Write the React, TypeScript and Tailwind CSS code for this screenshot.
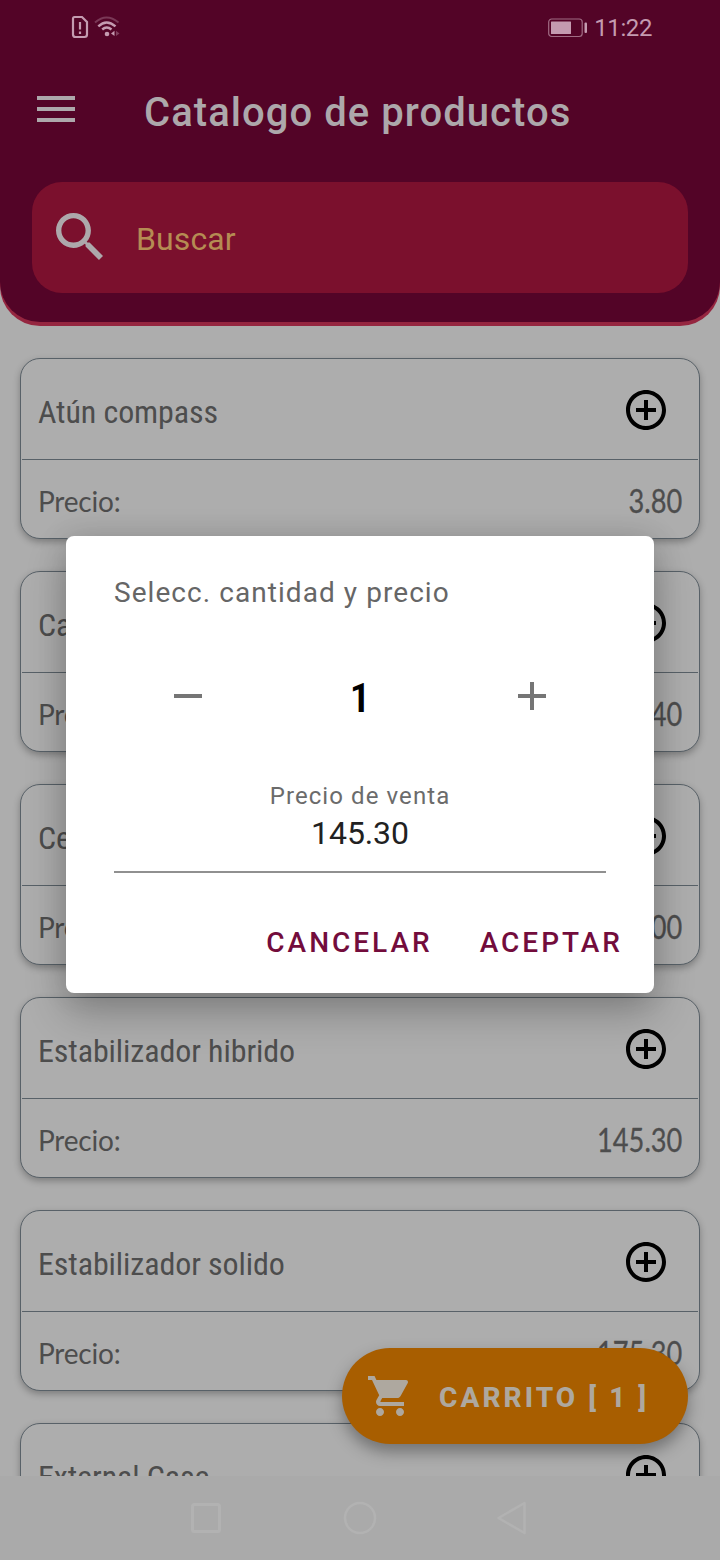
type Product = { name: string; price: string };

const products: Product[] = [
  { name: "Atún compass", price: "3.80" },
  { name: "Cable usb", price: "2.40" },
  { name: "Cerveza", price: "1.00" },
  { name: "Estabilizador hibrido", price: "145.30" },
  { name: "Estabilizador solido", price: "175.30" },
  { name: "External Case", price: "20.00" },
];

function StatusBar() {
  return (
    <div className="flex h-14 items-center pl-[70px] pr-[68px] text-[#c49bb0]">
      <svg width="20" height="24" viewBox="0 0 20 24" fill="none" stroke="currentColor" strokeWidth="2.2" className="relative -top-px">
        <path d="M4.5 2H12L17 7V19.5Q17 22 14.5 22H5.5Q3 22 3 19.5V4Q3 2 4.500 2Z" />
        <path d="M10 7V14.500M10 16.500V19" strokeWidth="2.200" />
      </svg>
      <svg width="26" height="22" viewBox="0 0 26 22" fill="none" stroke="currentColor" strokeWidth="2.400" className="relative -top-px ml-1">
        <path d="M1 6.500Q12.500 -3.500 24.500 6.500" opacity="0.35" strokeWidth="2" />
        <path d="M4.300 10.300Q12.500 2.500 21.500 10.300" />
        <path d="M8.200 13.500Q12.700 9.500 17.500 13.500" />
        <circle cx="13" cy="18" r="2.300" fill="currentColor" stroke="none" />
        <path d="M20.500 14.800V20L17 17.400Z" fill="currentColor" stroke="none" />
        <path d="M22 14.800V20L25.500 17.400Z" fill="currentColor" stroke="none" opacity="0.4" />
      </svg>
      <div className="flex-1" />
      <svg width="40" height="20" viewBox="0 0 40 20" fill="none">
        <rect x="0.700" y="1" width="33.500" height="17.500" rx="3" stroke="#a06c84" strokeWidth="1.200" />
        <rect x="3" y="3.500" width="20" height="12.500" rx="0.500" fill="currentColor" />
        <rect x="36.500" y="4.500" width="2.500" height="10.500" rx="1" fill="currentColor" />
      </svg>
      <span className="ml-[6px] text-[24px] leading-none tracking-[-0.4px]">11:22</span>
    </div>
  );
}

function Header() {
  return (
    <header className="h-[326px] shrink-0 rounded-b-[40px] bg-[#952640] pb-1">
      <div className="h-full rounded-b-[40px] bg-[#530427]">
        <StatusBar />
        <div className="flex h-[112px] items-center pl-[37px]">
          <svg width="38" height="26" viewBox="0 0 38 26" fill="#ada8ab" className="relative -top-[3px]">
            <path d="M0 0H38V4H0ZM0 11H38V15H0ZM0 22H38V26H0Z" />
          </svg>
          <h1 className="ml-[69px] whitespace-nowrap pt-px text-[40px] font-medium leading-none tracking-[1.05px] text-[#ada8ab]">
            Catalogo de productos
          </h1>
        </div>
        <div className="mx-8 mt-[14px] flex h-[111px] items-center rounded-[30px] bg-[#7b102d] pl-6">
          <svg width="47" height="47" viewBox="3 3 17.490 17.490" fill="#ada8ab" className="relative -top-px">
            <path d="M15.500 14h-.79l-.28-.27C15.410 12.590 16 11.110 16 9.500 16 5.910 13.090 3 9.500 3S3 5.910 3 9.500 5.910 16 9.500 16c1.610 0 3.090-.59 4.230-1.570l.27.28v.79l5 4.990L20.490 19l-4.990-5zm-6 0C7.010 14 5 11.990 5 9.500S7.010 5 9.500 5 14 7.010 14 9.500 11.990 14 9.500 14z" />
          </svg>
          <span className="ml-[33px] pt-[2px] text-[32px] leading-none tracking-[0.1px] text-[#b58c53]">Buscar</span>
        </div>
      </div>
    </header>
  );
}

function ProductCard({ name, price }: Product) {
  return (
    <article className="flex h-[181px] shrink-0 flex-col rounded-[20px] border border-[#586168] bg-[#adadad] px-px text-[#4d4d4d] shadow-[0_3px_7px_rgba(0,0,0,0.28)]">
      <div className="flex h-[101px] items-center justify-between border-b border-[#586168] pl-4 pr-8 pt-[2px]">
        <span className="whitespace-nowrap pt-1 text-[32px] leading-none tracking-[-0.1px] [font-stretch:75%]">{name}</span>
        <svg width="40" height="40" viewBox="2 2 20 20" fill="#000">
          <path d="M13 7h-2v4H7v2h4v4h2v-4h4v-2h-4V7zm-1-5C6.480 2 2 6.480 2 12s4.480 10 10 10 10-4.480 10-10S17.520 2 12 2zm0 18c-4.410 0-8-3.590-8-8s3.590-8 8-8 8 3.590 8 8-3.590 8-8 8z" />
        </svg>
      </div>
      <div className="flex flex-1 items-center justify-between px-4 pt-1 font-['Lato',sans-serif]">
        <span className="text-[28px] leading-none tracking-[-0.200px]">Precio:</span>
        <span className="origin-right scale-x-[0.850] text-[32px] leading-none [-webkit-text-stroke:0.3px_currentColor]">{price}</span>
      </div>
    </article>
  );
}

function QuantityDialog() {
  return (
    <section className="absolute left-[66px] top-[536px] flex h-[457px] w-[588px] flex-col rounded-lg bg-white px-12 shadow-[0_20px_40px_rgba(0,0,0,0.24),0_0_30px_rgba(0,0,0,0.12)]">
      <h2 className="mt-[41px] text-[28px] leading-8 tracking-[1.060px] text-[#666]">Selecc. cantidad y precio</h2>
      <div className="mt-[67px] flex h-[40px] items-center justify-between px-[60px]">
        <svg width="28" height="28" viewBox="0 0 28 28" fill="#757575"><path d="M0 12H28V16H0Z" /></svg>
        <span className="pt-1 text-[41px] font-semibold leading-none text-black [font-stretch:80%]">1</span>
        <svg width="28" height="28" viewBox="0 0 28 28" fill="#757575"><path d="M12 0H16V12H28V16H16V28H12V16H0V12H12Z" /></svg>
      </div>
      <div className="mt-[66px] flex h-[91px] flex-col items-center border-b-2 border-[#909090]">
        <span className="text-[24px] leading-7 tracking-[1.080px] text-[#6b6b6b]">Precio de venta</span>
        <span className="mt-[5px] text-[32px] leading-9 tracking-[-0.100px] text-[#212121]">145.30</span>
      </div>
      <div className="-mr-[17px] mt-[54px] flex justify-end gap-[47px] text-[28px] font-medium leading-8 tracking-[3px] text-[#730c3c]">
        <button className="uppercase">CANCELAR</button>
        <button className="uppercase">ACEPTAR</button>
      </div>
    </section>
  );
}

function CartButton() {
  return (
    <button className="absolute left-[342px] top-[1348px] flex h-24 w-[346px] items-center rounded-full bg-[#a85e00] pl-[26px] text-[#aea89f] shadow-[0_8px_16px_rgba(0,0,0,0.34)]">
      <svg width="40" height="40" viewBox="1 2 20 20" fill="currentColor">
        <path d="M7 18c-1.100 0-1.990.9-1.990 2S5.900 22 7 22s2-.9 2-2-.9-2-2-2zM1 2v2h2l3.600 7.590-1.350 2.450c-.16.280-.25.610-.25.960 0 1.100.9 2 2 2h12v-2H7.420c-.14 0-.25-.11-.25-.25l.03-.12.900-1.630h7.450c.75 0 1.410-.41 1.750-1.030l3.580-6.490c.08-.14.120-.31.120-.48 0-.55-.45-1-1-1H5.210l-.94-2H1zm16 16c-1.100 0-1.990.9-1.990 2s.89 2 1.990 2 2-.9 2-2-.9-2-2-2z" />
      </svg>
      <span className="ml-[31px] whitespace-nowrap pt-[3px] text-[28px] font-extrabold leading-none tracking-[3.050px]">CARRITO [ 1 ]</span>
    </button>
  );
}

function NavigationBar() {
  return (
    <nav className="flex h-[84px] shrink-0 items-center justify-center bg-[#aaaaaa] pr-[2px]">
      <svg width="34" height="34" viewBox="0 0 34 34" fill="none" stroke="#b2b2b2" strokeWidth="3"><rect x="3.500" y="3.500" width="27" height="27" rx="2" /></svg>
      <svg width="34" height="34" viewBox="0 0 34 34" fill="none" stroke="#b2b2b2" strokeWidth="2.500" className="ml-[120px] mr-[118px]"><circle cx="17" cy="17" r="15" /></svg>
      <svg width="34" height="34" viewBox="0 0 34 34" fill="none" stroke="#b2b2b2" strokeWidth="2.500" strokeLinejoin="round"><path d="M29.500 2V32L3.500 17Z" /></svg>
    </nav>
  );
}

export default function App() {
  return (
    <div className="relative flex h-[1560px] w-[720px] flex-col overflow-hidden bg-[#adadad] font-['Roboto',sans-serif]">
      <Header />
      <main className="flex min-h-0 flex-1 flex-col gap-8 overflow-hidden px-5 pt-8">
        {products.map((product) => (
          <ProductCard key={product.name} {...product} />
        ))}
      </main>
      <NavigationBar />
      <CartButton />
      <QuantityDialog />
    </div>
  );
}
